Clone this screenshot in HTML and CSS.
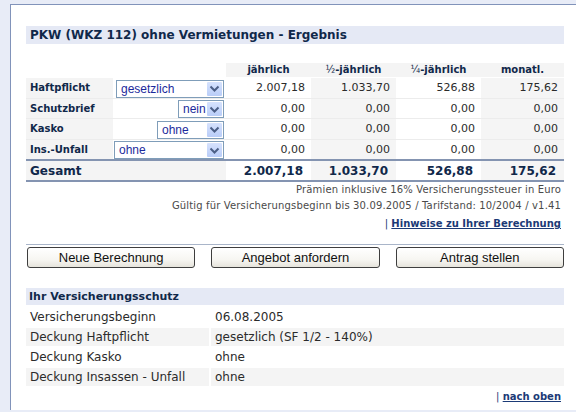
FILE: index.html
```html
<!DOCTYPE html>
<html lang="de">
<head>
<meta charset="utf-8">
<title>PKW Ergebnis</title>
<link rel="stylesheet" href="styles.css">
</head>
<body>
<div class="panel">
  <div class="content">
    <h1 class="title">PKW (WKZ 112) ohne Vermietungen - Ergebnis</h1>

    <table class="calc">
      <colgroup>
        <col class="c-label"><col class="c-sel"><col class="c-num"><col class="c-num"><col class="c-num"><col class="c-num2">
      </colgroup>
      <thead>
        <tr>
          <th class="blank"></th><th class="blank"></th>
          <th>jährlich</th>
          <th><span class="frac">½</span>-jährlich</th>
          <th><span class="frac">¼</span>-jährlich</th>
          <th>monatl.</th>
        </tr>
      </thead>
      <tbody>
        <tr>
          <td class="lbl">Haftpflicht</td>
          <td class="selcell"><div class="sel w1"><span class="sel-text">gesetzlich</span><span class="sel-btn"><svg width="15" height="15" viewBox="0 0 15 15"><path d="M3.5 5.5 L7.5 9.5 L11.5 5.5" fill="none" stroke="#4c5f86" stroke-width="2"/></svg></span></div></td>
          <td class="n">2.007,18</td><td class="n alt">1.033,70</td><td class="n">526,88</td><td class="n alt">175,62</td>
        </tr>
        <tr>
          <td class="lbl">Schutzbrief</td>
          <td class="selcell"><div class="sel w2"><span class="sel-text">nein</span><span class="sel-btn"><svg width="15" height="15" viewBox="0 0 15 15"><path d="M3.5 5.5 L7.5 9.5 L11.5 5.5" fill="none" stroke="#4c5f86" stroke-width="2"/></svg></span></div></td>
          <td class="n">0,00</td><td class="n alt">0,00</td><td class="n">0,00</td><td class="n alt">0,00</td>
        </tr>
        <tr>
          <td class="lbl">Kasko</td>
          <td class="selcell"><div class="sel w3"><span class="sel-text">ohne</span><span class="sel-btn"><svg width="15" height="15" viewBox="0 0 15 15"><path d="M3.5 5.5 L7.5 9.5 L11.5 5.5" fill="none" stroke="#4c5f86" stroke-width="2"/></svg></span></div></td>
          <td class="n">0,00</td><td class="n alt">0,00</td><td class="n">0,00</td><td class="n alt">0,00</td>
        </tr>
        <tr>
          <td class="lbl">Ins.-Unfall</td>
          <td class="selcell"><div class="sel w4"><span class="sel-text">ohne</span><span class="sel-btn"><svg width="15" height="15" viewBox="0 0 15 15"><path d="M3.5 5.5 L7.5 9.5 L11.5 5.5" fill="none" stroke="#4c5f86" stroke-width="2"/></svg></span></div></td>
          <td class="n">0,00</td><td class="n alt">0,00</td><td class="n">0,00</td><td class="n alt">0,00</td>
        </tr>
        <tr class="total">
          <td class="lbl" colspan="2">Gesamt</td>
          <td class="n">2.007,18</td><td class="n alt">1.033,70</td><td class="n">526,88</td><td class="n alt">175,62</td>
        </tr>
      </tbody>
    </table>

    <div class="notes">
      <p>Prämien inklusive 16% Versicherungssteuer in Euro</p>
      <p>Gültig für Versicherungsbeginn bis 30.09.2005 / Tarifstand: 10/2004 / v1.41</p>
      <p class="linkline"><span class="pipe">|</span> <a href="#">Hinweise zu Ihrer Berechnung</a></p>
    </div>

    <div class="actions">
      <button type="button">Neue Berechnung</button>
      <button type="button">Angebot anfordern</button>
      <button type="button">Antrag stellen</button>
    </div>

    <div class="summary">
      <div class="sum-head">Ihr Versicherungsschutz</div>
      <div class="sum-row"><div>Versicherungsbeginn</div><div>06.08.2005</div></div>
      <div class="sum-row shade"><div>Deckung Haftpflicht</div><div>gesetzlich (SF 1/2 - 140%)</div></div>
      <div class="sum-row"><div>Deckung Kasko</div><div>ohne</div></div>
      <div class="sum-row shade"><div>Deckung Insassen - Unfall</div><div>ohne</div></div>
    </div>

    <p class="linkline top"><span class="pipe">|</span> <a href="#">nach oben</a></p>
  </div>
</div>
</body>
</html>
```

FILE: styles.css
```css
html, body {
  margin: 0;
  padding: 0;
}
body {
  background: #e8ecf7;
  font-family: Verdana, "DejaVu Sans", sans-serif;
  color: #2b2b2b;
  height: 412px;
  overflow: hidden;
}
.panel {
  margin: 4px 0 0 10px;
  border-top: 1px solid #8193ba;
  border-left: 1px solid #8193ba;
  background: #fff;
  padding: 21px 0 5px 15px;
}
.content {
  width: 538px;
}
.title {
  margin: 0 0 19px;
  height: 18px;
  line-height: 19px;
  background: #e5e9f5;
  padding-left: 4px;
  font-size: 12px;
  font-weight: bold;
  color: #10284a;
}

/* calculation table */
.calc {
  width: 538px;
  table-layout: fixed;
  border-collapse: collapse;
}
.c-label { width: 87px; }
.c-sel { width: 113px; }
.c-num { width: 85px; }
.c-num2 { width: 83px; }
.calc th {
  height: 14px;
  padding: 0;
  font-size: 10px;
  font-weight: bold;
  color: #10284a;
  background: #f4f4f4;
  text-align: center;
  line-height: 14px;
}
.calc th.blank { background: #fff; }
.frac {
  font-size: 10px;
  font-weight: normal;
}
.calc td {
  height: 19px;
  padding: 0;
  border-top: 1px solid #fff;
  border-bottom: 1px solid #ececec;
}
.calc td.lbl {
  background: #f4f4f4;
  padding-left: 4px;
  font-size: 10px;
  font-weight: bold;
  color: #10284a;
}
.calc td.n {
  text-align: right;
  padding-right: 6px;
  font-size: 11px;
  color: #2b2b2b;
}
.calc td.alt { background: #f5f5f5; }
.calc td.selcell {
  text-align: right;
  padding-right: 2px;
}
.sel {
  display: inline-flex;
  align-items: center;
  justify-content: space-between;
  box-sizing: border-box;
  height: 18px;
  border: 1px solid #7f9db9;
  background: #fff;
  vertical-align: middle;
  text-align: left;
}
.sel.w1 { width: 108px; }
.sel.w2 { width: 46px; }
.sel.w3 { width: 67px; }
.sel.w4 { width: 110px; }
.sel-text {
  font-family: Tahoma, "Liberation Sans", Arial, sans-serif;
  font-size: 12px;
  color: #1c2a9c;
  padding-left: 4px;
}
.sel-btn {
  display: flex;
  width: 15px;
  height: 14px;
  margin-right: 1px;
  background: linear-gradient(#d6e2fd, #b9cdf8);
  border-radius: 1px;
  align-items: center;
  justify-content: center;
}
.sel-btn svg { display: block; }
.calc tr.total td {
  height: 19px;
  border-top: 2px solid #8494b1;
  border-bottom: 2px solid #8494b1;
  font-size: 12px;
  font-weight: bold;
  color: #10284a;
}
.calc tr.total td.lbl {
  font-size: 12px;
  background: #f4f4f4;
}
.calc tr.total td.n { padding-right: 8px; }

/* notes */
.notes p {
  margin: 0;
  text-align: right;
  font-size: 10px;
  line-height: 16px;
  color: #4a4a4a;
  padding-right: 3px;
  letter-spacing: 0.15px;
}
.notes .linkline { margin-top: 2px; letter-spacing: 0; }
.linkline a {
  font-weight: bold;
  color: #1b3a76;
  text-decoration: underline;
}
.pipe { color: #1b3a76; }
.linkline.top {
  margin: 3px 0 0;
  text-align: right;
  font-size: 10px;
  line-height: 16px;
  padding-right: 3px;
}

/* buttons */
.actions {
  margin-top: 12px;
  border-top: 1px solid #a9b5c9;
  padding-top: 2px;
  display: grid;
  grid-template-columns: repeat(3, 1fr);
  column-gap: 16px;
  padding-left: 1px;
}
.actions button {
  height: 21px;
  margin: 0;
  padding: 0;
  border: 1px solid #3e3e3e;
  border-radius: 3px;
  background: linear-gradient(#ffffff 0%, #f7f6f2 60%, #e6e4dc 100%);
  font-family: Arial, "Liberation Sans", sans-serif;
  font-size: 13px;
  color: #111;
}

/* summary */
.summary { margin-top: 20px; }
.sum-head {
  height: 17px;
  line-height: 17px;
  background: #e5e9f5;
  padding-left: 3px;
  font-size: 11px;
  font-weight: bold;
  color: #10284a;
  margin-bottom: 3px;
}
.sum-row {
  display: grid;
  grid-template-columns: 183px 1fr;
  column-gap: 2px;
  height: 18px;
  line-height: 18px;
  margin-bottom: 2px;
  font-size: 12px;
  color: #2b2b2b;
}
.sum-row > div { padding-left: 4px; }
.sum-row.shade > div { background: #f4f4f4; }
```
